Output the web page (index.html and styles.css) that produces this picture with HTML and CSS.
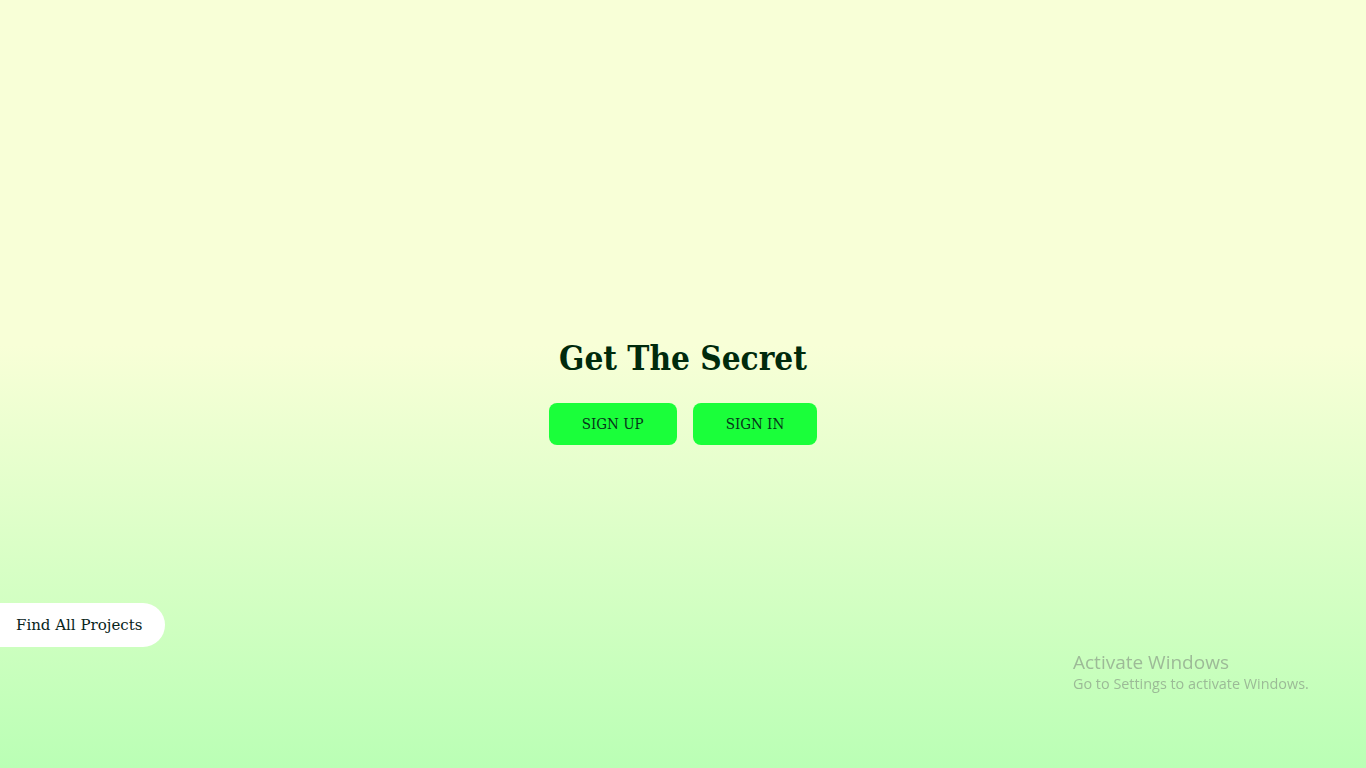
FILE: index.html
```html
<!DOCTYPE html>
<html lang="en">
<head>
<meta charset="utf-8">
<title>Get The Secret</title>
<link rel="stylesheet" href="styles.css">
</head>
<body>
<main class="hero">
  <h1 class="title">Get The Secret</h1>
  <div class="actions">
    <a class="btn" href="#">SIGN UP</a>
    <a class="btn" href="#">SIGN IN</a>
  </div>
</main>
<a class="projects" href="#">Find All Projects</a>
<div class="watermark">
  <div class="wm-title">Activate Windows</div>
  <div class="wm-sub">Go to Settings to activate Windows.</div>
</div>
</body>
</html>
```
FILE: styles.css
```css
html, body {
  margin: 0;
  padding: 0;
  height: 100%;
}
body {
  font-family: "DejaVu Serif", "Liberation Serif", serif;
  background: linear-gradient(to bottom, #f8ffd7 0%, #f8ffd7 45%, #baffb5 100%);
  color: #002a0c;
  overflow: hidden;
}
.hero {
  height: 100vh;
  display: flex;
  flex-direction: column;
  align-items: center;
  justify-content: center;
  padding-top: 14px;
  box-sizing: border-box;
}
.title {
  margin: 0 0 22px;
  font-family: "DejaVu Serif Condensed", "DejaVu Serif", serif;
  font-stretch: condensed;
  font-size: 33px;
  font-weight: bold;
  line-height: 44px;
  color: #002a0c;
}
.actions {
  display: flex;
  gap: 16px;
}
.btn {
  display: inline-flex;
  align-items: center;
  justify-content: center;
  height: 42px;
  padding: 0 33px;
  box-sizing: border-box;
  background: #1aff3a;
  color: #07331a;
  border-radius: 8px;
  font-family: "DejaVu Serif Condensed", "DejaVu Serif", serif;
  font-stretch: condensed;
  font-size: 15px;
  text-decoration: none;
}
.projects {
  position: fixed;
  left: 0;
  top: 603px;
  height: 44px;
  width: 165px;
  box-sizing: border-box;
  padding-left: 16px;
  display: flex;
  align-items: center;
  background: #ffffff;
  border-radius: 0 22px 22px 0;
  color: #08241a;
  font-size: 15px;
  text-decoration: none;
}
.watermark {
  position: fixed;
  left: 1073px;
  top: 650px;
  font-family: "Open Sans", "Noto Sans", sans-serif;
  color: rgba(120, 130, 120, 0.55);
}
.wm-title {
  font-size: 19px;
  line-height: 24px;
}
.wm-sub {
  font-size: 14.4px;
  line-height: 20px;
}
```
